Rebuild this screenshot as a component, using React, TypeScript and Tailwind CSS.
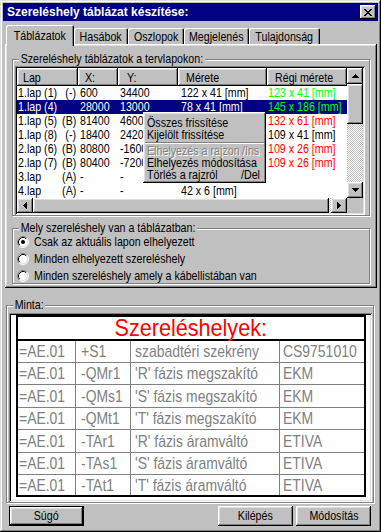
import React from 'react';

const ui = "font-['Liberation_Sans',Arial,sans-serif]";
const raised = 'shadow-[inset_-1px_-1px_0_#000,inset_1px_1px_0_#fff,inset_-2px_-2px_0_#808080,inset_2px_2px_0_#dfdfdf]';
const sunken = 'shadow-[inset_1px_1px_0_#808080,inset_-1px_-1px_0_#fff,inset_2px_2px_0_#000,inset_-2px_-2px_0_#dfdfdf]';
const etched = 'border border-[#808080] shadow-[inset_1px_1px_0_#fff,1px_1px_0_#fff]';
const checker = 'bg-[repeating-conic-gradient(#c0c0c0_0_25%,#fff_0_50%)] bg-[length:2px_2px]';

// the dialog's font is a narrow sans; squeeze Liberation Sans to match
function N({ children, className = 'origin-left' }: { children: React.ReactNode; className?: string }) {
  return <span className={`inline-block whitespace-nowrap scale-x-[0.82] ${className}`}>{children}</span>;
}

// menu text is a touch smaller
function M({ children }: { children: React.ReactNode }) {
  return <span className="inline-block whitespace-nowrap origin-left scale-x-[0.89]">{children}</span>;
}

type Dir = 'up' | 'down' | 'left' | 'right';

function Arrow({ dir }: { dir: Dir }) {
  const vertical = dir === 'up' || dir === 'down';
  const rects = [0, 1, 2, 3].map(i => {
    if (dir === 'up') return { x: 3 - i, y: i, w: 2 * i + 1, h: 1 };
    if (dir === 'down') return { x: i, y: i, w: 7 - 2 * i, h: 1 };
    if (dir === 'left') return { x: i, y: 3 - i, w: 1, h: 2 * i + 1 };
    return { x: i, y: i, w: 1, h: 7 - 2 * i };
  });
  return (
    <svg width={vertical ? 7 : 4} height={vertical ? 4 : 7} shapeRendering="crispEdges">
      {rects.map((r, i) => (
        <rect key={i} x={r.x} y={r.y} width={r.w} height={r.h} fill="#000" />
      ))}
    </svg>
  );
}

function CloseGlyph() {
  const cells: [number, number, number][] = [
    [0, 0, 2], [6, 0, 2], [1, 1, 2], [5, 1, 2], [2, 2, 4], [3, 3, 2],
    [2, 4, 4], [1, 5, 2], [5, 5, 2], [0, 6, 2], [6, 6, 2],
  ];
  return (
    <svg width="8" height="7" shapeRendering="crispEdges">
      {cells.map(([x, y, w], i) => (
        <rect key={i} x={x} y={y} width={w} height={1} fill="#000" />
      ))}
    </svg>
  );
}

function Radio({ checked }: { checked?: boolean }) {
  return (
    <svg width="12" height="12" className="shrink-0">
      <circle cx="6" cy="6" r="5" fill="#fff" />
      <path d="M2.11 9.89 A5.5 5.5 0 0 1 9.89 2.11" fill="none" stroke="#808080" strokeWidth="1" />
      <path d="M9.89 2.11 A5.5 5.5 0 0 1 2.11 9.89" fill="none" stroke="#fff" strokeWidth="1" />
      <path d="M2.82 9.18 A4.5 4.5 0 0 1 9.18 2.82" fill="none" stroke="#000" strokeWidth="1" />
      <path d="M9.18 2.82 A4.5 4.5 0 0 1 2.82 9.18" fill="none" stroke="#dfdfdf" strokeWidth="1" />
      {checked && <circle cx="6" cy="6" r="2" fill="#000" />}
    </svg>
  );
}

const tabs = [
  { label: 'Táblázatok', w: 'w-[68px]', active: true },
  { label: 'Hasábok', w: 'w-[54px]' },
  { label: 'Oszlopok', w: 'w-[56px]' },
  { label: 'Megjelenés', w: 'w-[65px]' },
  { label: 'Tulajdonság', w: 'w-[71px]' },
];

const cols = [
  { label: 'Lap', w: 'w-[61px]', hp: 'pl-[6px]' },
  { label: 'X:', w: 'w-[40px]', hp: 'pl-[7px]' },
  { label: 'Y:', w: 'w-[60px]', hp: 'pl-[9px]' },
  { label: 'Mérete', w: 'w-[89px]', hp: 'pl-[8px]' },
  { label: 'Régi mérete', w: 'w-[80px]', hp: 'pl-[8px]' },
];

// rows 3..7 sit partly under the popup menu: their Y value is cut at the menu edge
const rows = [
  { lap: '1.lap (1)', tag: '(-)', x: '600', y: '34400', m: '122 x 41 [mm]', r: '123 x 41 [mm]', rc: 'text-[#00ff00]' },
  { lap: '1.lap (4)', tag: '', x: '28000', y: '13000', m: '78 x 41 [mm]', r: '145 x 186 [mm]', rc: 'text-[#00ff00]', sel: true },
  { lap: '1.lap (5)', tag: '(B)', x: '81400', y: '46000', m: '', r: '132 x 61 [mm]', rc: 'text-[#ff0000]', cut: true },
  { lap: '1.lap (8)', tag: '(-)', x: '18400', y: '24200', m: '', r: '109 x 41 [mm]', rc: 'text-black', cut: true },
  { lap: '2.lap (6)', tag: '(B)', x: '80800', y: '-16000', m: '', r: '109 x 26 [mm]', rc: 'text-[#ff0000]', cut: true },
  { lap: '2.lap (7)', tag: '(B)', x: '80400', y: '-72000', m: '', r: '109 x 26 [mm]', rc: 'text-[#ff0000]', cut: true },
  { lap: '3.lap', tag: '(A)', x: '-', y: '-', m: '', r: '', rc: 'text-black', cut: true },
  { lap: '4.lap', tag: '(A)', x: '-', y: '-', m: '42 x 6 [mm]', r: '', rc: 'text-black' },
];

const minta = [
  ['=AE.01', '+S1', 'szabadtéri szekrény', 'CS9751010'],
  ['=AE.01', '-QMr1', "'R' fázis megszakító", 'EKM'],
  ['=AE.01', '-QMs1', "'S' fázis megszakító", 'EKM'],
  ['=AE.01', '-QMt1', "'T' fázis megszakító", 'EKM'],
  ['=AE.01', '-TAr1', "'R' fázis áramváltó", 'ETIVA'],
  ['=AE.01', '-TAs1', "'S' fázis áramváltó", 'ETIVA'],
  ['=AE.01', '-TAt1', "'T' fázis áramváltó", 'ETIVA'],
];
const mintaHeights = ['h-[22px]', 'h-[22px]', 'h-[23px]', 'h-[22px]', 'h-[23px]', 'h-[22px]', 'h-[20px]'];

export default function App() {
  return (
    <div className={`relative w-[381px] h-[532px] overflow-hidden bg-[#c0c0c0] p-[3px] text-[13px] text-black ${ui} shadow-[inset_-1px_-1px_0_#000,inset_1px_1px_0_#dfdfdf,inset_-2px_-2px_0_#808080,inset_2px_2px_0_#fff]`}>
      {/* title bar */}
      <div className="h-[18px] bg-[#000080] flex items-center justify-between pl-[4px] pr-[2px]">
        <span className="text-white font-bold text-[12px] leading-none">Szereléshely táblázat készítése:</span>
        <div className={`w-[16px] h-[14px] bg-[#c0c0c0] ${raised} flex items-center justify-center`}>
          <CloseGlyph />
        </div>
      </div>

      {/* tabs */}
      <div className="ml-[2px] mt-[2px]">
        <div className="h-[21px] flex items-end pl-[1px]">
          {tabs.map(t => (
            <div
              key={t.label}
              className={`${t.w} bg-[#c0c0c0] rounded-t-[2px] flex justify-center leading-[14px] shadow-[inset_1px_1px_0_#fff,inset_-1px_0_0_#000,inset_-2px_0_0_#808080] ${
                t.active ? 'relative z-10 h-[21px] -mb-[2px] pt-[4px]' : 'h-[16px] pt-[2px]'
              }`}
            >
              <N className="origin-center">{t.label}</N>
            </div>
          ))}
        </div>

        {/* tab panel */}
        <div className={`w-[372px] h-[244px] ${raised} pt-[15px] pl-[7px]`}>
          <div className={`relative w-[358px] h-[157px] ${etched} pt-[6px] pl-[2px]`}>
            <span className="absolute left-[6px] -top-[8px] px-[2px] bg-[#c0c0c0] leading-[14px] whitespace-nowrap origin-left scale-x-[0.82]">
              Szereléshely táblázatok a tervlapokon:
            </span>

            {/* list view */}
            <div className={`w-[350px] h-[149px] bg-white ${sunken} p-[2px] flex flex-col`}>
              <div className="flex h-[130px]">
                <div className="w-[330px] flex flex-col">
                  <div className="flex h-[18px]">
                    {cols.map(c => (
                      <div key={c.label} className={`${c.w} ${c.hp} bg-[#c0c0c0] ${raised} flex items-center leading-none`}>
                        <N>{c.label}</N>
                      </div>
                    ))}
                  </div>
                  {rows.map(r => (
                    <div key={r.lap} className={`flex h-[14px] leading-[14px] ${r.sel ? 'bg-[#000080] text-white' : ''}`}>
                      <div className="w-[61px] flex pl-[1px] pr-[2px]">
                        <span className="w-[40px]"><N>{r.lap}</N></span>
                        <span className="flex-1 flex justify-end"><N className="origin-right">{r.tag}</N></span>
                      </div>
                      <div className="w-[40px] pl-[2px]"><N>{r.x}</N></div>
                      <div className="w-[60px] pl-[2px]">
                        <div className={r.cut ? 'w-[23px] overflow-hidden' : ''}><N>{r.y}</N></div>
                      </div>
                      <div className="w-[89px] pl-[3px]"><N>{r.m}</N></div>
                      <div className={`w-[80px] pl-[1px] ${r.rc}`}><N>{r.r}</N></div>
                    </div>
                  ))}
                </div>
                {/* vertical scrollbar */}
                <div className="w-[16px] flex flex-col">
                  <div className={`h-[16px] bg-[#c0c0c0] ${raised} flex items-center justify-center`}>
                    <Arrow dir="up" />
                  </div>
                  <div className={`h-[40px] bg-[#c0c0c0] ${raised}`} />
                  <div className={`flex-1 ${checker}`} />
                  <div className={`h-[16px] bg-[#c0c0c0] ${raised} flex items-center justify-center`}>
                    <Arrow dir="down" />
                  </div>
                </div>
              </div>
              {/* horizontal scrollbar */}
              <div className="flex h-[15px]">
                <div className={`w-[16px] bg-[#c0c0c0] ${raised} flex items-center justify-center`}>
                  <Arrow dir="left" />
                </div>
                <div className={`w-[296px] bg-[#c0c0c0] ${raised}`} />
                <div className={`flex-1 ${checker}`} />
                <div className={`w-[16px] bg-[#c0c0c0] ${raised} flex items-center justify-center`}>
                  <Arrow dir="right" />
                </div>
                <div className="w-[16px] bg-[#c0c0c0]" />
              </div>
            </div>
          </div>

          {/* radio group */}
          <div className={`relative mt-[12px] w-[358px] h-[56px] ${etched} pt-[4px] pl-[4px]`}>
            <span className="absolute left-[6px] -top-[8px] px-[2px] bg-[#c0c0c0] leading-[14px] whitespace-nowrap origin-left scale-x-[0.82]">
              Mely szereléshely van a táblázatban:
            </span>
            {[
              { label: 'Csak az aktuális lapon elhelyezett', checked: true },
              { label: 'Minden elhelyezett szereléshely' },
              { label: 'Minden szereléshely amely a kábellistában van' },
            ].map(o => (
              <div key={o.label} className="h-[17px] flex items-center gap-[5px] leading-none">
                <Radio checked={o.checked} />
                <N>{o.label}</N>
              </div>
            ))}
          </div>
        </div>
      </div>

      {/* sample */}
      <div className={`relative mt-[17px] ml-[3px] w-[368px] h-[198px] ${etched} pt-[7px] pl-[2px]`}>
        <span className="absolute left-[6px] -top-[8px] px-[2px] bg-[#c0c0c0] leading-[14px] whitespace-nowrap origin-left scale-x-[0.82]">Minta:</span>
        <div className={`w-[363px] h-[189px] bg-white ${sunken} pt-[2px] pl-[7px]`}>
          <div className="w-[350px] border-2 border-black">
            <div className="h-[24px] border-b-2 border-black flex items-center justify-center text-[#ff0000] text-[24px] leading-none">
              <span className="inline-block whitespace-nowrap origin-center scale-x-[0.9]">Szereléshelyek:</span>
            </div>
            {minta.map((row, i) => (
              <div
                key={i}
                className={`${mintaHeights[i]} grid grid-cols-[57px_55px_149px_1fr] text-[#808080] text-[17px] leading-none ${
                  i < minta.length - 1 ? 'border-b border-[#808080]' : ''
                }`}
              >
                <div className="flex items-center pl-[1px] overflow-hidden"><N>{row[0]}</N></div>
                <div className="flex items-center pl-[5px] border-l border-[#808080] overflow-hidden"><N>{row[1]}</N></div>
                <div className="flex items-center pl-[4px] border-l border-[#808080] overflow-hidden"><N>{row[2]}</N></div>
                <div className="flex items-center pl-[3px] border-l border-[#808080] overflow-hidden"><N>{row[3]}</N></div>
              </div>
            ))}
          </div>
        </div>
      </div>

      {/* buttons */}
      <div className="mt-[3px] flex justify-between pl-[6px] pr-[7px]">
        <div className="w-[75px] h-[20px] bg-[#c0c0c0] flex items-center justify-center shadow-[inset_0_0_0_1px_#000,inset_-2px_-2px_0_#000,inset_2px_2px_0_#fff,inset_-3px_-3px_0_#808080,inset_3px_3px_0_#dfdfdf]">
          <N className="origin-center">Súgó</N>
        </div>
        <div className="flex gap-[3px]">
          <div className={`w-[75px] h-[20px] bg-[#c0c0c0] ${raised} flex items-center justify-center`}>
            <N className="origin-center">Kilépés</N>
          </div>
          <div className={`w-[75px] h-[20px] bg-[#c0c0c0] ${raised} flex items-center justify-center`}>
            <N className="origin-center">Módosítás</N>
          </div>
        </div>
      </div>

      {/* context menu */}
      <div className={`absolute left-[143px] top-[112px] w-[123px] h-[71px] bg-[#c0c0c0] ${raised} pt-[5px] px-[4px] text-[12px] leading-[12px]`}>
        <div className="h-[12px]"><M>Összes frissítése</M></div>
        <div className="h-[12px]"><M>Kijelölt frissítése</M></div>
        <div className="h-[4px] flex flex-col justify-center -mx-[2px]">
          <div className="h-[1px] bg-[#808080]" />
          <div className="h-[1px] bg-white" />
        </div>
        <div className="h-[12px] flex text-[#808080] [text-shadow:1px_1px_0_#fff]">
          <span className="w-[95px]"><M>Elhelyezés a rajzon</M></span>
          <M>/Ins</M>
        </div>
        <div className="h-[12px]"><M>Elhelyezés módosítása</M></div>
        <div className="h-[12px] flex">
          <span className="w-[95px]"><M>Törlés a rajzról</M></span>
          <M>/Del</M>
        </div>
      </div>
    </div>
  );
}
